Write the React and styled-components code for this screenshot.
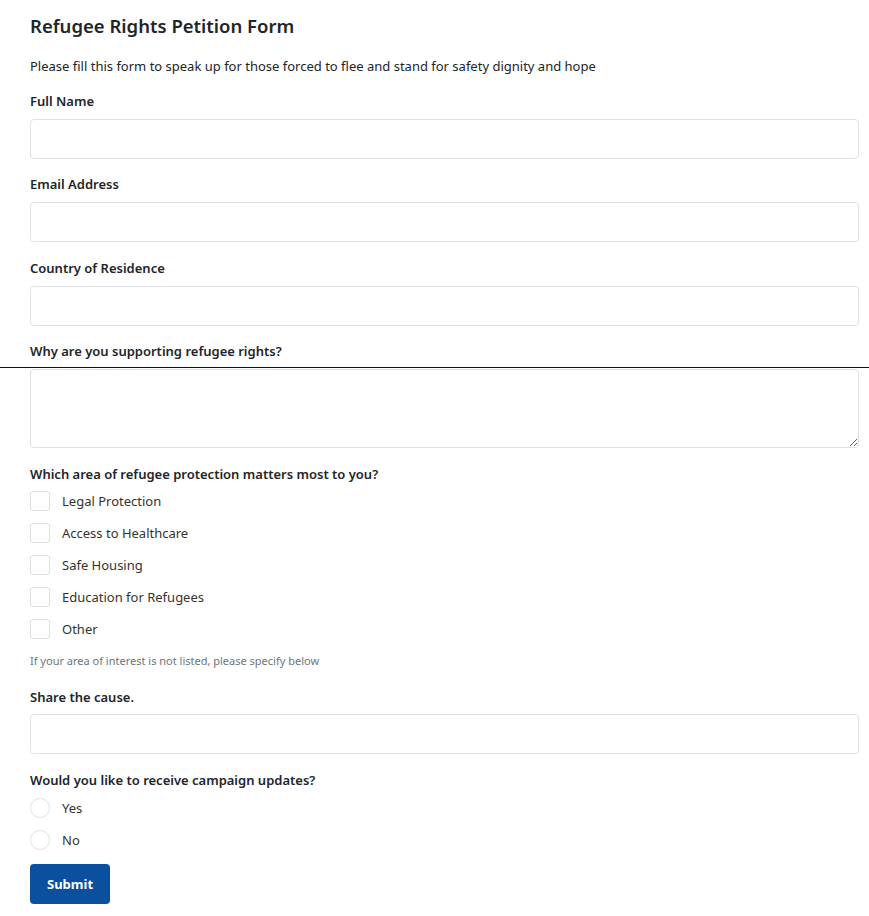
import styled, { createGlobalStyle } from "styled-components"

const GlobalStyle = createGlobalStyle`
  body {
    margin: 0;
    background: #fff;
    font-family: "Noto Sans", "Open Sans", sans-serif;
    color: #212529;
  }
`

const Form = styled.form`
  display: flex;
  flex-direction: column;
  padding: 15px 10px 20px 30px;
`

const Title = styled.h2`
  margin: 0 0 19px;
  font-size: 18.5px;
  line-height: 22px;
  font-weight: 600;
  color: #212529;
`

const Desc = styled.p`
  margin: 0 0 15px;
  font-size: 13px;
  line-height: 20px;
`

const Label = styled.label`
  display: block;
  margin: ${(p) => p.$top || 0}px 0 ${(p) => (p.$bottom ?? 8)}px;
  font-size: 13px;
  line-height: 20px;
  font-weight: 600;
`

const Input = styled.input`
  box-sizing: border-box;
  height: 40px;
  width: 100%;
  margin: 0;
  border: 1px solid #dee2e6;
  border-radius: 4px;
  background: #fff;
`

const TextArea = styled.textarea`
  box-sizing: border-box;
  display: block;
  height: 79px;
  width: 100%;
  margin: 0;
  border: 1px solid #dee2e6;
  border-radius: 4px;
  resize: vertical;
`

const Rule = styled.div`
  height: 1px;
  margin: 0 -10px 1px -30px;
  background: #111;
`

const Options = styled.div`
  display: flex;
  flex-direction: column;
  gap: 12px;
`

const Option = styled.label`
  display: flex;
  align-items: center;
  gap: 12px;
  font-size: 13px;
  line-height: 20px;
  color: #333;
`

const Box = styled.span`
  box-sizing: border-box;
  width: 20px;
  height: 20px;
  border: 1px solid #dcdfe3;
  border-radius: ${(p) => (p.$round ? "50%" : "3px")};
  background: #fff;
`

const Hint = styled.small`
  display: block;
  margin: 14px 0 0;
  font-size: 11px;
  line-height: 15px;
  color: #6c757d;
`

const Button = styled.button`
  align-self: flex-start;
  margin-top: 14px;
  height: 40px;
  padding: 0 17px;
  border: none;
  border-radius: 4px;
  background: #0b4f9f;
  color: #fff;
  font-family: inherit;
  font-size: 13px;
  font-weight: 700;
`

const areas = [
  "Legal Protection",
  "Access to Healthcare",
  "Safe Housing",
  "Education for Refugees",
  "Other",
]

const App = () => {
  return (
    <>
      <GlobalStyle />
      <Form onSubmit={(e) => e.preventDefault()}>
        <Title>Refugee Rights Petition Form</Title>
        <Desc>
          Please fill this form to speak up for those forced to flee and stand for safety dignity and hope
        </Desc>

        <Label>Full Name</Label>
        <Input type="text" />

        <Label $top={15}>Email Address</Label>
        <Input type="email" />

        <Label $top={16}>Country of Residence</Label>
        <Input type="text" />

        <Label $top={15} $bottom={6}>Why are you supporting refugee rights?</Label>
        <Rule />
        <TextArea />

        <Label $top={16} $bottom={7}>Which area of refugee protection matters most to you?</Label>
        <Options>
          {areas.map((a) => (
            <Option key={a}>
              <Box />
              {a}
            </Option>
          ))}
        </Options>
        <Hint>If your area of interest is not listed, please specify below</Hint>

        <Label $top={19} $bottom={7}>Share the cause.</Label>
        <Input type="text" />

        <Label $top={16} $bottom={8}>Would you like to receive campaign updates?</Label>
        <Options>
          <Option>
            <Box $round />
            Yes
          </Option>
          <Option>
            <Box $round />
            No
          </Option>
        </Options>

        <Button type="submit">Submit</Button>
      </Form>
    </>
  )
}

export default App
